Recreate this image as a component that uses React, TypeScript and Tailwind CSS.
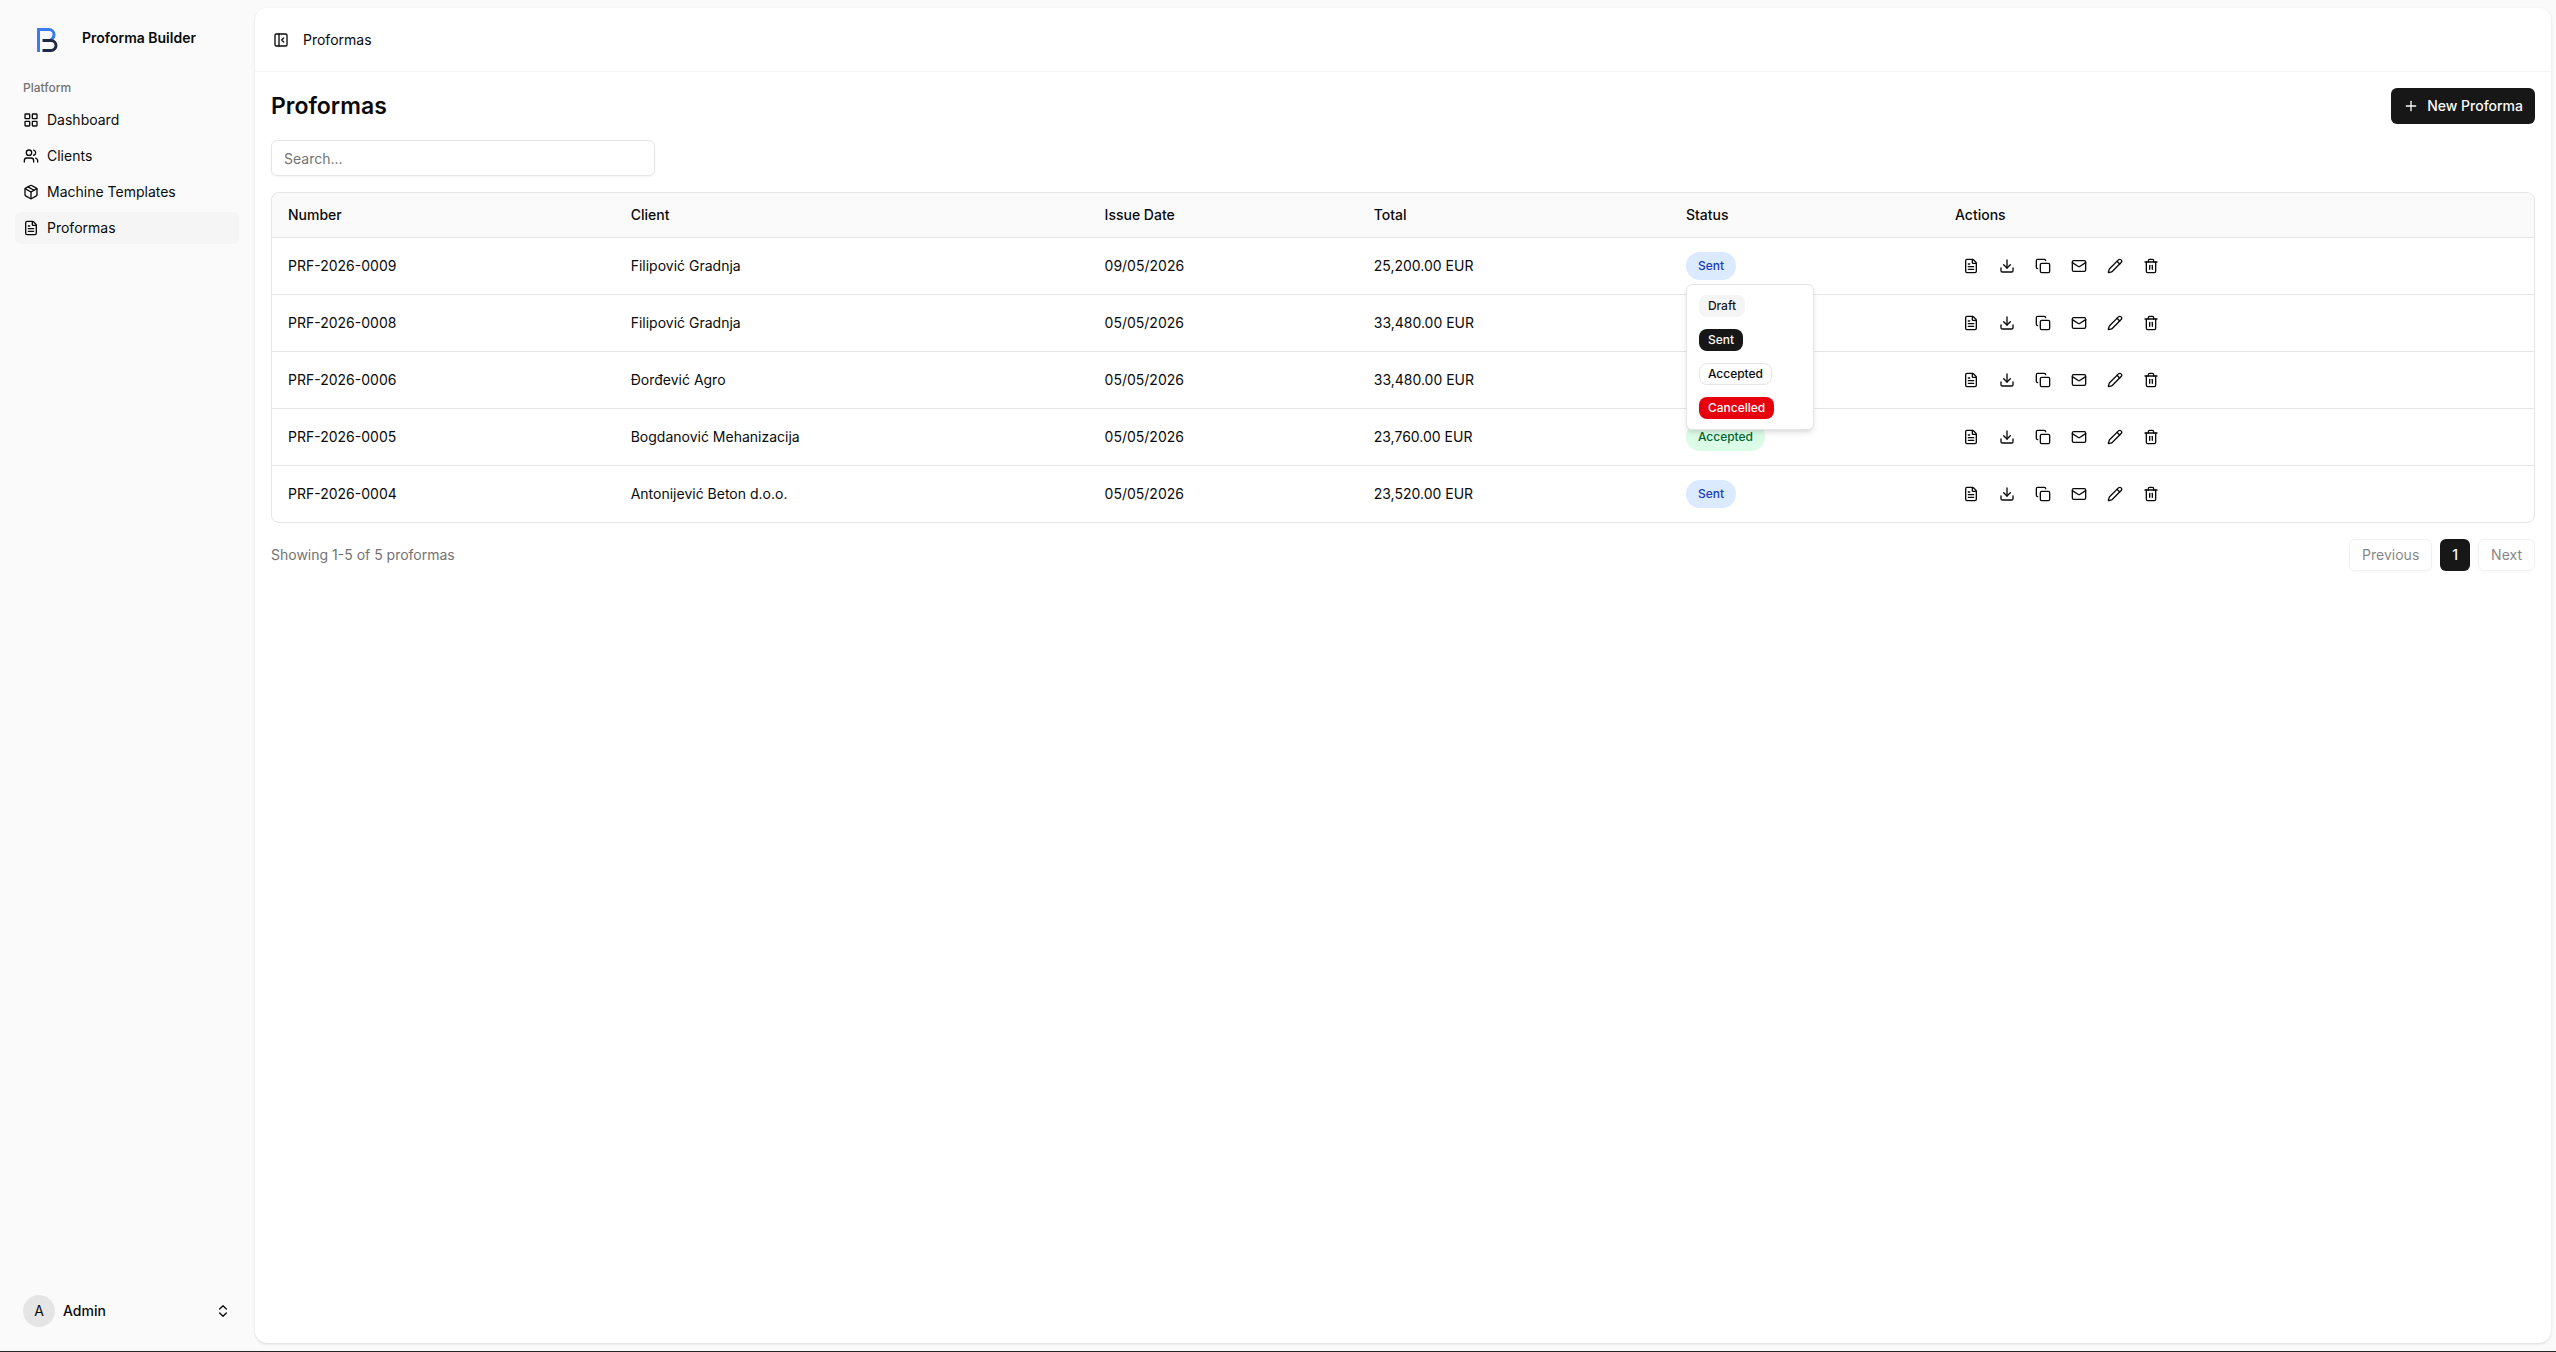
import React from "react";
import {
  ChevronsUpDown,
  Copy,
  Download,
  FileText,
  LayoutGrid,
  Mail,
  Package,
  PanelLeftClose,
  Pencil,
  Plus,
  Trash2,
  Users,
} from "lucide-react";

const navItems = [
  { label: "Dashboard", icon: LayoutGrid },
  { label: "Clients", icon: Users },
  { label: "Machine Templates", icon: Package },
  { label: "Proformas", icon: FileText, active: true },
];

type Proforma = { number: string; client: string; date: string; total: string; status?: string };

const rows: Proforma[] = [
  { number: "PRF-2026-0009", client: "Filipović Gradnja", date: "09/05/2026", total: "25,200.00 EUR", status: "Sent" },
  { number: "PRF-2026-0008", client: "Filipović Gradnja", date: "05/05/2026", total: "33,480.00 EUR" },
  { number: "PRF-2026-0006", client: "Đorđević Agro", date: "05/05/2026", total: "33,480.00 EUR" },
  { number: "PRF-2026-0005", client: "Bogdanović Mehanizacija", date: "05/05/2026", total: "23,760.00 EUR", status: "Accepted" },
  { number: "PRF-2026-0004", client: "Antonijević Beton d.o.o.", date: "05/05/2026", total: "23,520.00 EUR", status: "Sent" },
];

const actions = [
  { label: "View", icon: FileText },
  { label: "Download", icon: Download },
  { label: "Duplicate", icon: Copy },
  { label: "Email", icon: Mail },
  { label: "Edit", icon: Pencil },
  { label: "Delete", icon: Trash2 },
];

const statusOptions = [
  { label: "Draft", style: "border-transparent bg-neutral-100 text-neutral-900" },
  { label: "Sent", style: "border-transparent bg-neutral-900 text-neutral-50" },
  { label: "Accepted", style: "border-neutral-200 text-neutral-950" },
  { label: "Cancelled", style: "border-transparent bg-[#e7000b] text-white" },
];

function Logo() {
  return (
    <svg viewBox="0 0 22 26" className="h-[26px] w-[22px]" fill="none" strokeWidth="3" aria-hidden="true">
      <path d="M2.500 25V2.500H13a5 5 0 0 1 5 5c0 2.600-1.500 4.500-3.500 5.500" stroke="#3b7af0" />
      <path d="M6.500 13.500H15a5 5 0 0 1 0 10H6.500" stroke="#1f2a44" />
    </svg>
  );
}

function Sidebar() {
  return (
    <aside className="flex w-[255px] shrink-0 flex-col">
      <a href="#" className="mt-4 flex h-12 items-center gap-6 pl-9 text-sm font-semibold">
        <Logo />
        <span className="pb-1">Proforma Builder</span>
      </a>
      <nav aria-label="Platform" className="mt-2 pr-4 pl-[15px]">
        <div className="flex h-8 items-center px-2 text-xs font-medium text-neutral-500">Platform</div>
        <ul className="flex flex-col gap-1">
          {navItems.map(({ label, icon: Icon, active }) => (
            <li key={label}>
              <a
                href="#"
                aria-current={active ? "page" : undefined}
                className={
                  active
                    ? "flex h-8 items-center gap-2 rounded-md bg-neutral-100 px-2 text-sm"
                    : "flex h-8 items-center gap-2 rounded-md px-2 text-sm"
                }
              >
                <Icon className="size-4" />
                {label}
              </a>
            </li>
          ))}
        </ul>
      </nav>
      <button className="mt-auto mr-4 mb-4 ml-[15px] flex h-12 items-center gap-2 px-2 text-left text-sm font-medium">
        <span className="flex size-8 items-center justify-center rounded-full bg-neutral-200 font-normal">A</span>
        <span className="flex-1">Admin</span>
        <ChevronsUpDown className="size-4" />
      </button>
    </aside>
  );
}

function StatusMenu() {
  return (
    <div
      role="menu"
      className="absolute top-full left-0 z-10 mt-1 w-32 rounded-md border border-neutral-200 bg-white p-1 shadow-md"
    >
      {statusOptions.map((option) => (
        <button key={option.label} role="menuitem" className="flex w-full px-2 py-1.5">
          <span className={`rounded-lg border px-2 py-0.5 text-xs font-medium ${option.style}`}>{option.label}</span>
        </button>
      ))}
    </div>
  );
}

function StatusCell({ status, open }: { status: string; open: boolean }) {
  return (
    <div className="relative flex">
      <button
        aria-haspopup="menu"
        aria-expanded={open}
        className={
          status === "Accepted"
            ? "h-7 rounded-full bg-green-100 px-3 text-xs font-medium text-green-800"
            : "h-7 rounded-full bg-blue-100 px-3 text-xs font-medium text-blue-800"
        }
      >
        {status}
      </button>
      {open && <StatusMenu />}
    </div>
  );
}

function ProformaTable() {
  return (
    <div className="rounded-lg border border-neutral-200">
      <table className="w-full table-fixed border-separate border-spacing-0 text-left text-sm">
        <colgroup>
          <col className="w-[15.15%]" />
          <col className="w-[20.95%]" />
          <col className="w-[11.9%]" />
          <col className="w-[13.8%]" />
          <col className="w-[11.9%]" />
          <col />
        </colgroup>
        <thead>
          <tr className="[&>th]:h-[45px] [&>th]:border-b [&>th]:border-neutral-200 [&>th]:bg-[#fafafa] [&>th]:px-4 [&>th]:font-medium">
            <th className="rounded-tl-lg">Number</th>
            <th>Client</th>
            <th>Issue Date</th>
            <th>Total</th>
            <th>Status</th>
            <th className="rounded-tr-lg">Actions</th>
          </tr>
        </thead>
        <tbody>
          {rows.map((row, index) => (
            <tr
              key={row.number}
              className="[&>td]:h-[57px] [&>td]:border-b [&>td]:border-neutral-200 [&>td]:px-4 last:[&>td]:h-14 last:[&>td]:border-b-0"
            >
              <td>{row.number}</td>
              <td>{row.client}</td>
              <td>{row.date}</td>
              <td>{row.total}</td>
              <td>{row.status && <StatusCell status={row.status} open={index === 0} />}</td>
              <td>
                <div className="flex gap-1">
                  {actions.map(({ label, icon: Icon }) => (
                    <button key={label} aria-label={label} className="flex size-8 items-center justify-center">
                      <Icon className="size-4" />
                    </button>
                  ))}
                </div>
              </td>
            </tr>
          ))}
        </tbody>
      </table>
    </div>
  );
}

export default function App() {
  return (
    <div className="flex min-h-screen border-b border-neutral-800 bg-[#fafafa] font-['Inter',sans-serif] text-neutral-950">
      <Sidebar />
      <main className="mt-2 mr-[5px] mb-2 flex-1 rounded-xl bg-white shadow-sm">
        <header className="flex h-16 items-center border-b border-neutral-100 px-3">
          <button aria-label="Toggle sidebar" className="flex size-7 items-center justify-center">
            <PanelLeftClose className="size-4" />
          </button>
          <nav aria-label="Breadcrumb" className="ml-2 text-sm">
            Proformas
          </nav>
        </header>
        <div className="flex flex-col gap-4 p-4">
          <div className="flex items-center justify-between">
            <h1 className="text-[23px] font-semibold">Proformas</h1>
            <button className="flex h-9 items-center gap-2 rounded-md bg-neutral-900 px-3 text-sm font-medium text-neutral-50">
              <Plus className="size-4" />
              New Proforma
            </button>
          </div>
          <input
            type="search"
            aria-label="Search proformas"
            placeholder="Search..."
            className="h-9 w-full max-w-sm rounded-md border border-neutral-200 px-3 text-sm shadow-xs placeholder:text-neutral-500"
          />
          <ProformaTable />
          <div className="flex items-center justify-between text-sm">
            <p className="text-neutral-500">Showing 1-5 of 5 proformas</p>
            <div className="flex gap-2">
              <button disabled className="h-8 rounded-md border border-neutral-200 px-3 opacity-50 shadow-xs">
                Previous
              </button>
              <button aria-current="page" className="h-8 rounded-md bg-neutral-900 px-3 font-medium text-neutral-50">
                1
              </button>
              <button disabled className="h-8 rounded-md border border-neutral-200 px-3 opacity-50 shadow-xs">
                Next
              </button>
            </div>
          </div>
        </div>
      </main>
    </div>
  );
}
